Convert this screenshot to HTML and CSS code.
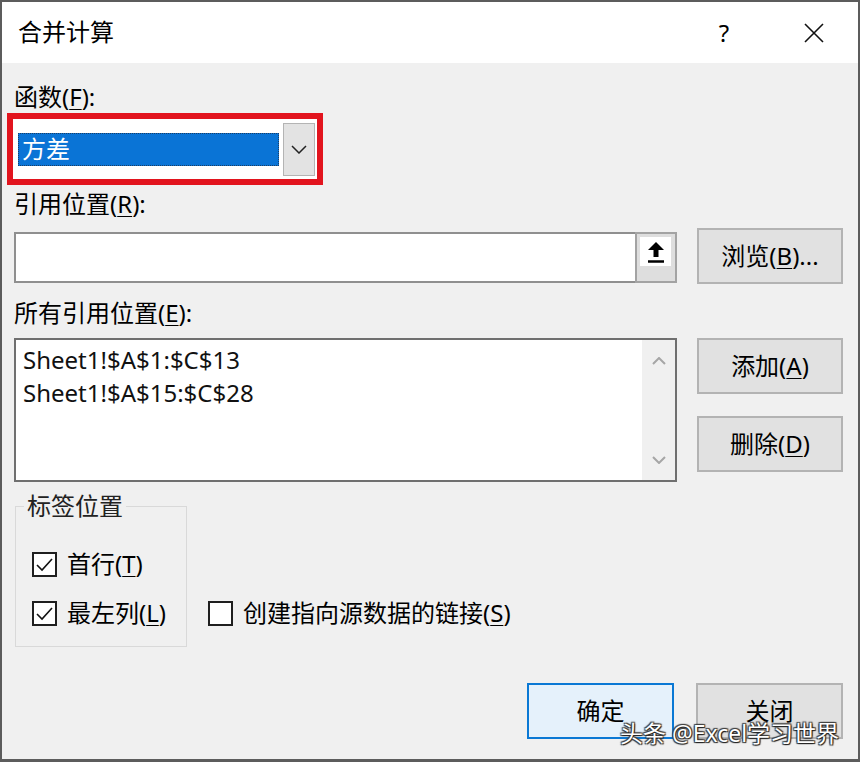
FILE: index.html
```html
<!DOCTYPE html>
<html lang="zh-CN">
<head>
<meta charset="utf-8">
<title>合并计算</title>
<link rel="stylesheet" href="styles.css">
</head>
<body>
<div class="window">
  <div class="titlebar">
    <div class="title">合并计算</div>
    <div class="controls">
      <span class="help">?</span>
      <span class="close">
        <svg width="20" height="20" viewBox="0 0 20 20"><path d="M1 1 L19 19 M19 1 L1 19" stroke="#111" stroke-width="1.6" fill="none"/></svg>
      </span>
    </div>
  </div>

  <div class="content">
    <div class="label">函数(<u>F</u>):</div>
    <div class="highlight">
      <div class="combo">
        <div class="selection">方差</div>
        <div class="drop">
          <svg width="16" height="9" viewBox="0 0 16 9"><path d="M1 1 L8 8 L15 1" stroke="#222" stroke-width="1.5" fill="none"/></svg>
        </div>
      </div>
    </div>

    <div class="label label-ref">引用位置(<u>R</u>):</div>
    <div class="row row-ref">
      <div class="input">
        <div class="collapse">
          <div class="collapse-face">
            <svg width="18" height="22" viewBox="0 0 18 22"><path d="M9 1 L1 9 L6.5 9 L6.5 16 L11.5 16 L11.5 9 L17 9 Z" fill="#000"/><path d="M1 20.5 L17 20.5" stroke="#000" stroke-width="2.5"/></svg>
          </div>
        </div>
      </div>
      <div class="btn">浏览(<u>B</u>)...</div>
    </div>

    <div class="label label-all">所有引用位置(<u>E</u>):</div>
    <div class="row row-list">
      <div class="listbox">
        <div class="items">
          <div class="item">Sheet1!$A$1:$C$13</div>
          <div class="item">Sheet1!$A$15:$C$28</div>
        </div>
        <div class="scrollbar">
          <svg width="14" height="8" viewBox="0 0 14 8"><path d="M1 7 L7 1 L13 7" stroke="#a6a6a6" stroke-width="2" fill="none"/></svg>
          <svg width="14" height="8" viewBox="0 0 14 8"><path d="M1 1 L7 7 L13 1" stroke="#a6a6a6" stroke-width="2" fill="none"/></svg>
        </div>
      </div>
      <div class="side-buttons">
        <div class="btn">添加(<u>A</u>)</div>
        <div class="btn">删除(<u>D</u>)</div>
      </div>
    </div>

    <div class="options">
      <fieldset class="group">
        <legend>标签位置</legend>
        <div class="check first">
          <span class="box"><svg width="21" height="21" viewBox="0 0 21 21"><path d="M3 11 L8 16 L18 5" stroke="#111" stroke-width="1.6" fill="none"/></svg></span>
          <span>首行(<u>T</u>)</span>
        </div>
        <div class="check second">
          <span class="box"><svg width="21" height="21" viewBox="0 0 21 21"><path d="M3 11 L8 16 L18 5" stroke="#111" stroke-width="1.6" fill="none"/></svg></span>
          <span>最左列(<u>L</u>)</span>
        </div>
      </fieldset>
      <div class="check link">
        <span class="box"></span>
        <span>创建指向源数据的链接(<u>S</u>)</span>
      </div>
    </div>

    <div class="actions">
      <div class="btn btn-default">确定</div>
      <div class="btn">关闭</div>
    </div>
  </div>

  <div class="watermark">头条 @Excel学习世界</div>
</div>
</body>
</html>
```

FILE: styles.css
```css
* { box-sizing: border-box; }

html, body {
  margin: 0;
  padding: 0;
  background: #f0f0f0;
}

body {
  font-family: "Noto Sans", "Noto Sans CJK SC", sans-serif;
  font-size: 24px;
  color: #000;
}

u {
  text-decoration-thickness: 1px;
  text-underline-offset: 3px;
}

.window {
  position: relative;
  width: 860px;
  height: 762px;
  border: 2px solid #5c5c5c;
  border-bottom-width: 3px;
  background: #f0f0f0;
  overflow: hidden;
}

.titlebar {
  height: 61px;
  background: #ffffff;
  display: flex;
  align-items: center;
  justify-content: space-between;
  padding: 0 34px 0 16px;
}

.title {
  line-height: 30px;
  padding-bottom: 2px;
}

.controls {
  display: flex;
  align-items: center;
  gap: 70px;
}

.help {
  width: 20px;
  text-align: center;
  font-size: 24px;
  line-height: 30px;
}

.close {
  width: 20px;
  height: 20px;
  display: flex;
}

.content {
  padding: 19px 15px 0 12px;
}

.label {
  line-height: 30px;
  height: 30px;
}

.highlight {
  margin: 1px 0 0 -7px;
  width: 316px;
  height: 72px;
  border: 6px solid #e2141e;
  background: #ffffff;
}

.combo {
  height: 100%;
  display: flex;
  align-items: stretch;
  padding: 4px 2px 3px 5px;
}

.selection {
  align-self: center;
  width: 261px;
  height: 33px;
  margin-right: 4px;
  margin-top: -1px;
  background: #0a74d6;
  border: 1px dotted #1b3f66;
  color: #ffffff;
  line-height: 30px;
  padding-left: 3px;
}

.drop {
  width: 32px;
  background: #e3e3e3;
  border: 1px solid #b4b4b4;
  display: flex;
  align-items: center;
  justify-content: center;
}

.label-ref { margin-top: 4px; }

.row {
  display: grid;
  grid-template-columns: 663px 146px;
  column-gap: 20px;
}

.row-ref {
  margin-top: 9px;
  align-items: start;
}

.input {
  margin-top: 4px;
  height: 51px;
  background: #ffffff;
  border: 2px solid #8f8f8f;
  border-right: none;
  display: flex;
  justify-content: flex-end;
}

.collapse {
  width: 42px;
  margin-top: -2px;
  height: 51px;
  background: #dedede;
  border: 2px solid #a3a3a3;
  padding: 3px 4px 0 3px;
}

.collapse-face {
  height: 29px;
  background: #ffffff;
  display: flex;
  align-items: center;
  justify-content: center;
}

.btn {
  height: 56px;
  background: #e1e1e1;
  border: 2px solid #b3b3b3;
  display: flex;
  align-items: center;
  justify-content: center;
  line-height: 30px;
}

.label-all { margin-top: 14px; }

.row-list {
  margin-top: 10px;
  align-items: start;
}

.listbox {
  height: 144px;
  background: #ffffff;
  border: 2px solid #6f6f6f;
  display: flex;
}

.items {
  flex: 1;
  padding: 3px 0 0 7px;
}

.item {
  line-height: 33px;
  color: #111;
}

.scrollbar {
  width: 33px;
  background: #f0f0f0;
  display: flex;
  flex-direction: column;
  align-items: center;
  justify-content: space-between;
  padding: 17px 0 16px;
}

.side-buttons {
  display: flex;
  flex-direction: column;
  gap: 22px;
}

.options {
  display: flex;
  align-items: flex-end;
  margin-top: 12px;
}

.group {
  margin: 0 0 0 1px;
  width: 172px;
  min-inline-size: 0;
  border: 1px solid #d9d9d9;
  padding: 0 0 18px 16px;
}

.group legend {
  margin-left: -8px;
  padding: 0 3px;
  line-height: 24px;
  color: #222;
}

.check {
  display: flex;
  align-items: center;
  gap: 10px;
  height: 30px;
  line-height: 30px;
  white-space: nowrap;
}

.check.first { margin-top: 31px; }
.check.second { margin-top: 19px; }

.check.link {
  margin: 0 0 19px 21px;
}

.box {
  width: 25px;
  height: 25px;
  border: 2px solid #1f1f1f;
  background: #ffffff;
  display: flex;
  align-items: center;
  justify-content: center;
  flex: none;
}

.actions {
  display: flex;
  justify-content: flex-end;
  gap: 22px;
  margin-top: 36px;
}

.actions .btn { width: 147px; }

.btn-default {
  background: #e5f1fb;
  border-color: #0a78d4;
}

.watermark {
  position: absolute;
  left: 618px;
  top: 717px;
  font-size: 23px;
  line-height: 28px;
  color: #ffffff;
  white-space: nowrap;
  text-shadow: 0 0 1px #222, 1px 1px 1px #222, -1px -1px 1px #444, 1px -1px 1px #444, -1px 1px 1px #444;
}
```
